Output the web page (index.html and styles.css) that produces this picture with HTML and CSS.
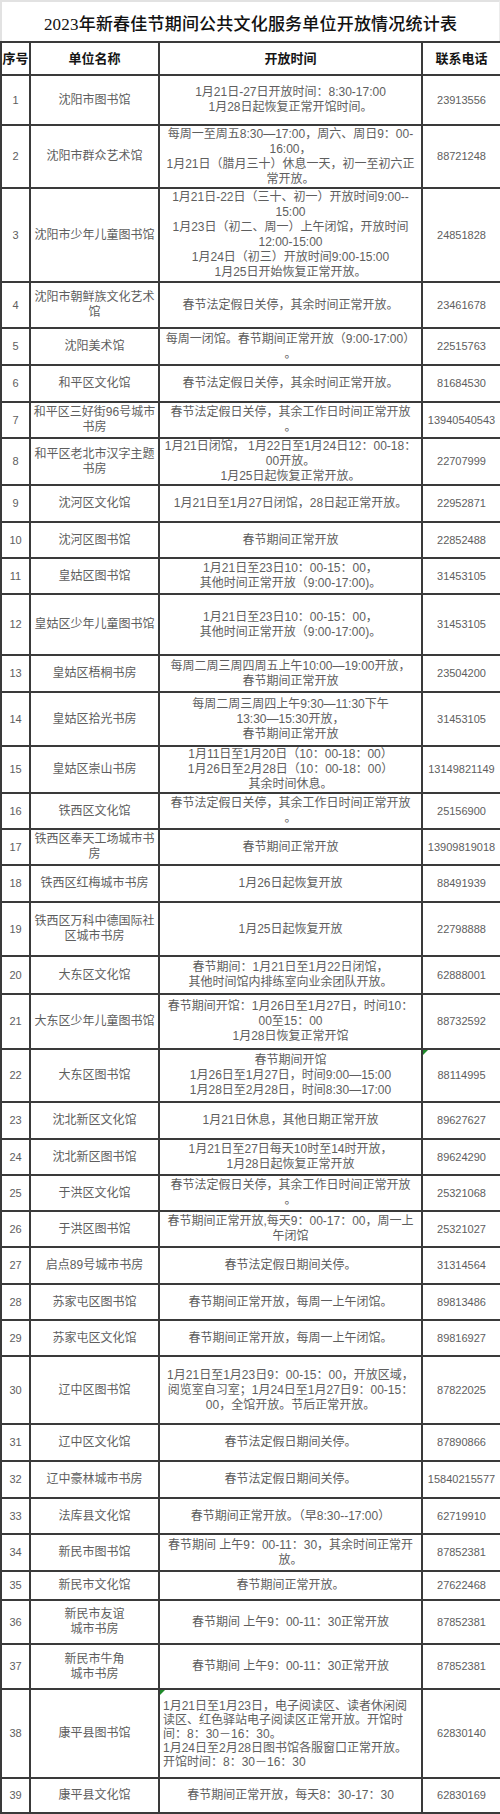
FILE: index.html
```html
<!DOCTYPE html>
<html lang="zh-CN">
<head>
<meta charset="utf-8">
<title>2023年新春佳节期间公共文化服务单位开放情况统计表</title>
<link rel="stylesheet" href="styles.css">
</head>
<body>
<div class="sheet">
  <div class="title">2023年新春佳节期间公共文化服务单位开放情况统计表</div>
  <table class="grid">
    <colgroup>
      <col class="c-no"><col class="c-name"><col class="c-time"><col class="c-tel">
    </colgroup>
    <thead>
      <tr class="r33"><th class="th-no">序号</th><th>单位名称</th><th>开放时间</th><th>联系电话</th></tr>
    </thead>
    <tbody>
      <tr class="r50"><td class="no">1</td><td class="name">沈阳市图书馆</td><td class="time">1月21日-27日开放时间：8:30-17:00<br>1月28日起恢复正常开馆时间。</td><td class="tel">23913556</td></tr>
      <tr class="r63"><td class="no">2</td><td class="name">沈阳市群众艺术馆</td><td class="time">每周一至周五8:30—17:00，周六、周日9：00-<br>16:00，<br>1月21日（腊月三十）休息一天，初一至初六正<br>常开放。</td><td class="tel">88721248</td></tr>
      <tr class="r94"><td class="no">3</td><td class="name">沈阳市少年儿童图书馆</td><td class="time">1月21日-22日（三十、初一）开放时间9:00--<br>15:00<br>1月23日（初二、周一）上午闭馆，开放时间<br>12:00-15:00<br>1月24日（初三）开放时间9:00-15:00<br>1月25日开始恢复正常开放。</td><td class="tel">24851828</td></tr>
      <tr class="r46"><td class="no">4</td><td class="name">沈阳市朝鲜族文化艺术<br>馆</td><td class="time">春节法定假日关停，其余时间正常开放。</td><td class="tel">23461678</td></tr>
      <tr class="r37"><td class="no">5</td><td class="name">沈阳美术馆</td><td class="time">每周一闭馆。春节期间正常开放（9:00-17:00）<br>。</td><td class="tel">22515763</td></tr>
      <tr class="r37"><td class="no">6</td><td class="name">和平区文化馆</td><td class="time">春节法定假日关停，其余时间正常开放。</td><td class="tel">81684530</td></tr>
      <tr class="r36"><td class="no">7</td><td class="name">和平区三好街96号城市<br>书房</td><td class="time">春节法定假日关停，其余工作日时间正常开放<br>。</td><td class="tel">13940540543</td></tr>
      <tr class="r46"><td class="no">8</td><td class="name">和平区老北市汉字主题<br>书房</td><td class="time">1月21日闭馆， 1月22日至1月24日12：00-18：<br>00开放。<br>1月25日起恢复正常开放。</td><td class="tel">22707999</td></tr>
      <tr class="r37"><td class="no">9</td><td class="name">沈河区文化馆</td><td class="time">1月21日至1月27日闭馆，28日起正常开放。</td><td class="tel">22952871</td></tr>
      <tr class="r36"><td class="no">10</td><td class="name">沈河区图书馆</td><td class="time">春节期间正常开放</td><td class="tel">22852488</td></tr>
      <tr class="r36"><td class="no">11</td><td class="name">皇姑区图书馆</td><td class="time">1月21日至23日10：00-15：00，<br>其他时间正常开放（9:00-17:00)。</td><td class="tel">31453105</td></tr>
      <tr class="r61"><td class="no">12</td><td class="name">皇姑区少年儿童图书馆</td><td class="time">1月21日至23日10：00-15：00，<br>其他时间正常开放（9:00-17:00)。</td><td class="tel">31453105</td></tr>
      <tr class="r37"><td class="no">13</td><td class="name">皇姑区梧桐书房</td><td class="time">每周二周三周四周五上午10:00—19:00开放，<br>春节期间正常开放</td><td class="tel">23504200</td></tr>
      <tr class="r54"><td class="no">14</td><td class="name">皇姑区拾光书房</td><td class="time">每周二周三周四上午9:30—11:30下午<br>13:30—15:30开放，<br>春节期间正常开放</td><td class="tel">31453105</td></tr>
      <tr class="r47"><td class="no">15</td><td class="name">皇姑区崇山书房</td><td class="time">1月11日至1月20日（10：00-18：00）<br>1月26日至2月28日（10：00-18：00）<br>其余时间休息。</td><td class="tel">13149821149</td></tr>
      <tr class="r36"><td class="no">16</td><td class="name">铁西区文化馆</td><td class="time">春节法定假日关停，其余工作日时间正常开放<br>。</td><td class="tel">25156900</td></tr>
      <tr class="r36"><td class="no">17</td><td class="name">铁西区奉天工场城市书<br>房</td><td class="time">春节期间正常开放</td><td class="tel">13909819018</td></tr>
      <tr class="r37"><td class="no">18</td><td class="name">铁西区红梅城市书房</td><td class="time">1月26日起恢复开放</td><td class="tel">88491939</td></tr>
      <tr class="r54"><td class="no">19</td><td class="name">铁西区万科中德国际社<br>区城市书房</td><td class="time">1月25日起恢复开放</td><td class="tel">22798888</td></tr>
      <tr class="r38"><td class="no">20</td><td class="name">大东区文化馆</td><td class="time">春节期间：1月21日至1月22日闭馆，<br>其他时间馆内排练室向业余团队开放。</td><td class="tel">62888001</td></tr>
      <tr class="r55"><td class="no">21</td><td class="name">大东区少年儿童图书馆</td><td class="time">春节期间开馆：1月26日至1月27日，时间10：<br>00至15：00<br>1月28日恢复正常开馆</td><td class="tel">88732592</td></tr>
      <tr class="r53"><td class="no">22</td><td class="name">大东区图书馆</td><td class="time">春节期间开馆<br>1月26日至1月27日，时间9:00—15:00<br>1月28日至2月28日，时间8:30—17:00</td><td class="tel flag">88114995</td></tr>
      <tr class="r37"><td class="no">23</td><td class="name">沈北新区文化馆</td><td class="time">1月21日休息，其他日期正常开放</td><td class="tel">89627627</td></tr>
      <tr class="r36"><td class="no">24</td><td class="name">沈北新区图书馆</td><td class="time">1月21日至27日每天10时至14时开放，<br>1月28日起恢复正常开放</td><td class="tel">89624290</td></tr>
      <tr class="r36"><td class="no">25</td><td class="name">于洪区文化馆</td><td class="time">春节法定假日关停，其余工作日时间正常开放<br>。</td><td class="tel">25321068</td></tr>
      <tr class="r36"><td class="no">26</td><td class="name">于洪区图书馆</td><td class="time">春节期间正常开放,每天9：00-17：00，周一上<br>午闭馆</td><td class="tel">25321027</td></tr>
      <tr class="r37"><td class="no">27</td><td class="name">启点89号城市书房</td><td class="time">春节法定假日期间关停。</td><td class="tel">31314564</td></tr>
      <tr class="r36"><td class="no">28</td><td class="name">苏家屯区图书馆</td><td class="time">春节期间正常开放，每周一上午闭馆。</td><td class="tel">89813486</td></tr>
      <tr class="r36"><td class="no">29</td><td class="name">苏家屯区文化馆</td><td class="time">春节期间正常开放，每周一上午闭馆。</td><td class="tel">89816927</td></tr>
      <tr class="r68"><td class="no">30</td><td class="name">辽中区图书馆</td><td class="time">1月21日至1月23日9：00-15：00，开放区域，<br>阅览室自习室；1月24日至1月27日9：00-15：<br>00，全馆开放。节后正常开放。</td><td class="tel">87822025</td></tr>
      <tr class="r37"><td class="no">31</td><td class="name">辽中区文化馆</td><td class="time">春节法定假日期间关停。</td><td class="tel">87890866</td></tr>
      <tr class="r37"><td class="no">32</td><td class="name">辽中豪林城市书房</td><td class="time">春节法定假日期间关停。</td><td class="tel">15840215577</td></tr>
      <tr class="r36"><td class="no">33</td><td class="name">法库县文化馆</td><td class="time">春节期间正常开放。（早8:30--17:00）</td><td class="tel">62719910</td></tr>
      <tr class="r37"><td class="no">34</td><td class="name">新民市图书馆</td><td class="time">春节期间 上午9：00-11：30，其余时间正常开<br>放。</td><td class="tel">87852381</td></tr>
      <tr class="r29"><td class="no">35</td><td class="name">新民市文化馆</td><td class="time">春节期间正常开放。</td><td class="tel">27622468</td></tr>
      <tr class="r44"><td class="no">36</td><td class="name">新民市友谊<br>城市书房</td><td class="time">春节期间 上午9：00-11：30正常开放</td><td class="tel">87852381</td></tr>
      <tr class="r45"><td class="no">37</td><td class="name">新民市牛角<br>城市书房</td><td class="time">春节期间 上午9：00-11：30正常开放</td><td class="tel">87852381</td></tr>
      <tr class="r89"><td class="no">38</td><td class="name">康平县图书馆</td><td class="time left flag">1月21日至1月23日，电子阅读区、读者休闲阅<br>读区、红色驿站电子阅读区正常开放。开馆时<br>间：8：30－16：30。<br>1月24日至2月28日图书馆各服窗口正常开放。<br>开馆时间：8：30－16：30</td><td class="tel">62830140</td></tr>
      <tr class="r35"><td class="no">39</td><td class="name">康平县文化馆</td><td class="time">春节期间正常开放，每天8：30-17：30</td><td class="tel">62830169</td></tr>
    </tbody>
  </table>
</div>
</body>
</html>
```

FILE: styles.css
```css
html, body {
  margin: 0;
  padding: 0;
  background: #ffffff;
}

.sheet {
  width: 500px;
  background: #ffffff;
}

.title {
  height: 41px;
  box-sizing: border-box;
  border-top: 2px solid #e2e2e2;
  border-left: 2px solid #e2e2e2;
  border-right: 1px solid #ececec;
  display: flex;
  align-items: center;
  justify-content: center;
  padding-top: 2px;
  font-family: "Liberation Serif", "Noto Sans CJK SC", serif;
  font-size: 17px;
  font-weight: 500;
  color: #111111;
  letter-spacing: 0.2px;
}

.grid {
  width: 500px;
  table-layout: fixed;
  border-collapse: collapse;
  font-family: "Liberation Sans", "Noto Sans CJK SC", sans-serif;
}

.c-no { width: 29px; }
.c-name { width: 129px; }
.c-time { width: 263px; }
.c-tel { width: 79px; }

.grid th,
.grid td {
  border: 2px solid #3a3a3a;
  padding: 0 2px;
  text-align: center;
  vertical-align: middle;
}

.grid th {
  font-size: 13px;
  font-weight: 700;
  color: #151515;
  line-height: 16px;
}

.grid th.th-no {
  padding: 0;
  white-space: nowrap;
}

.grid td {
  font-size: 12px;
  line-height: 15px;
  color: #5e5e5e;
}

.grid td.no,
.grid td.tel {
  font-size: 11px;
  padding: 0;
}

.grid td.left {
  text-align: left;
  padding-left: 3px;
  line-height: 14px;
}

.grid td.flag {
  position: relative;
}

.grid td.flag::before {
  content: "";
  position: absolute;
  left: 0;
  top: 0;
  width: 0;
  height: 0;
  border-top: 5px solid #1f8a2a;
  border-right: 5px solid transparent;
}

.r29 { height: 29px; }
.r33 { height: 33px; }
.r35 { height: 35px; }
.r36 { height: 36px; }
.r37 { height: 37px; }
.r38 { height: 38px; }
.r44 { height: 44px; }
.r45 { height: 45px; }
.r46 { height: 46px; }
.r47 { height: 47px; }
.r50 { height: 50px; }
.r53 { height: 53px; }
.r54 { height: 54px; }
.r55 { height: 55px; }
.r61 { height: 61px; }
.r63 { height: 63px; }
.r68 { height: 68px; }
.r89 { height: 89px; }
.r94 { height: 94px; }
```
